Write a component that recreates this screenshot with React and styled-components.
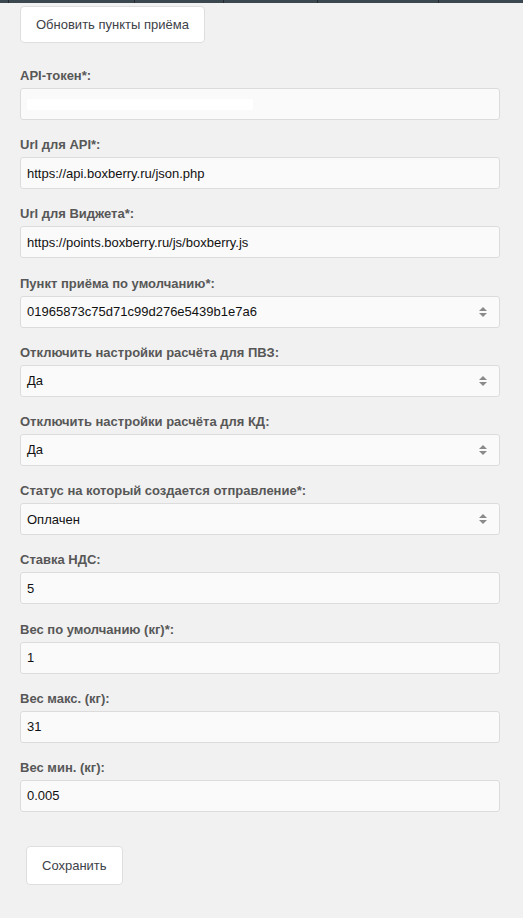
import React from 'react'
import styled, { createGlobalStyle } from 'styled-components'

const GlobalStyle = createGlobalStyle`
    html, body {
        margin: 0;
        padding: 0;
        background: #f1f1f1;
        font-family: "Liberation Sans", Arial, sans-serif;
    }
`;

const TopBar = styled.div`
    height: 3px;
    background: #3c4850;
    display: flex;
`;

const TopSegment = styled.div`
    width: ${p => p.w}px;
    border-right: 1px solid #23292e;
`;

const Page = styled.div`
    width: 480px;
    padding: 3px 0 33px 20px;
`;

const Button = styled.button`
    display: block;
    background: #fff;
    border: 1px solid #dedede;
    border-radius: 4px;
    font-family: "Liberation Sans", Arial, sans-serif;
    font-size: 13px;
    color: #3d4148;
    padding: 0 15px;
    height: ${p => p.h}px;
    margin-left: ${p => p.ml || 0}px;
    cursor: pointer;
`;

const Form = styled.div`
    display: flex;
    flex-direction: column;
    gap: 17.2px;
    margin-top: 25px;
`;

const Field = styled.div`
    display: flex;
    flex-direction: column;
    gap: 4px;
`;

const Label = styled.label`
    font-weight: bold;
    font-size: 13px;
    line-height: 16px;
    color: #575757;
`;

const Box = styled.div`
    position: relative;
    height: 32px;
    box-sizing: border-box;
    background: #fafafa;
    border: 1px solid #dcdcdc;
    border-radius: 3px;
    display: flex;
    align-items: center;
    padding: 0 6px;
    font-size: 13px;
    color: #111;
`;

const Mask = styled.span`
    display: block;
    width: 226px;
    height: 11px;
    background: #fff;
    border-radius: 2px;
`;

const Arrows = styled.span`
    position: absolute;
    right: 12px;
    top: 50%;
    transform: translateY(-50%);
    display: flex;
    flex-direction: column;
    gap: 2px;
`;

const Triangle = styled.span`
    width: 0;
    height: 0;
    border-left: 4px solid transparent;
    border-right: 4px solid transparent;
    ${p => p.up ? 'border-bottom: 4px solid #8a8a8a;' : 'border-top: 4px solid #8a8a8a;'}
`;

const Footer = styled.div`
    margin-top: 34px;
`;

const fields = [
    { label: 'API-токен*:', mask: true },
    { label: 'Url для API*:', value: 'https://api.boxberry.ru/json.php' },
    { label: 'Url для Виджета*:', value: 'https://points.boxberry.ru/js/boxberry.js' },
    { label: 'Пункт приёма по умолчанию*:', value: '01965873c75d71c99d276e5439b1e7a6', select: true },
    { label: 'Отключить настройки расчёта для ПВЗ:', value: 'Да', select: true },
    { label: 'Отключить настройки расчёта для КД:', value: 'Да', select: true },
    { label: 'Статус на который создается отправление*:', value: 'Оплачен', select: true },
    { label: 'Ставка НДС:', value: '5' },
    { label: 'Вес по умолчанию (кг)*:', value: '1' },
    { label: 'Вес макс. (кг):', value: '31' },
    { label: 'Вес мин. (кг):', value: '0.005' },
];

export default function App() {
    return (
        <>
            <GlobalStyle />
            <TopBar>
                <TopSegment w={8} />
                <TopSegment w={125} />
                <TopSegment w={88} />
                <TopSegment w={93} />
                <TopSegment w={120} />
            </TopBar>
            <Page>
                <Button h={37}>Обновить пункты приёма</Button>

                <Form>
                    {fields.map(f => (
                        <Field key={f.label}>
                            <Label>{f.label}</Label>
                            <Box>
                                {f.mask ? <Mask /> : f.value}
                                {f.select && (
                                    <Arrows>
                                        <Triangle up />
                                        <Triangle />
                                    </Arrows>
                                )}
                            </Box>
                        </Field>
                    ))}
                </Form>

                <Footer>
                    <Button h={39} ml={6}>Сохранить</Button>
                </Footer>
            </Page>
        </>
    )
}
